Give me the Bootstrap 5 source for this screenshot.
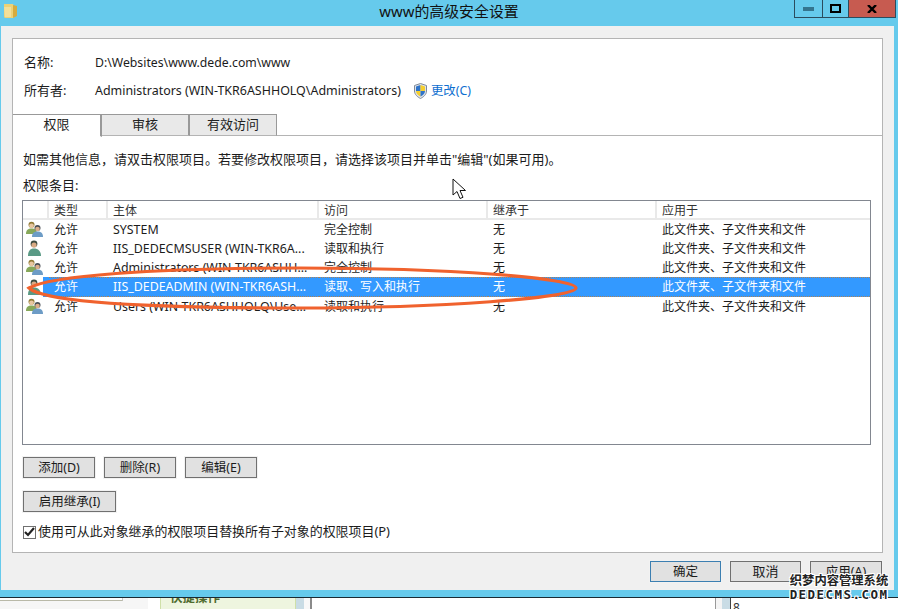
<!DOCTYPE html>
<html lang="zh">
<head>
<meta charset="utf-8">
<title>www的高级安全设置</title>
<link href="https://cdn.jsdelivr.net/npm/bootstrap@5.3.0/dist/css/bootstrap.min.css" rel="stylesheet">
<style>
html,body{margin:0;height:609px;overflow:hidden;background:#fff}
body{font-family:"Noto Sans","Noto Sans CJK SC",sans-serif;font-size:12px;color:#1c1c1c;position:relative;width:898px}
.win{height:598px;background:#66caec;border-bottom:1px solid #1a2a33;display:flex;flex-direction:column;padding:0 4px 7px 1px}
.tbar{height:26px;flex:none;position:relative;margin-left:-1px;margin-right:-4px}
.tbar-title{font-size:14.9px;line-height:22px;text-align:center;color:#111}
.folder{position:absolute;left:4px;top:3px}
.ctrls{position:absolute;right:2px;top:0;height:18px;display:flex;border:solid #2b4c5e;border-width:0 1px 1px 1px}
.ctl{display:flex;align-items:center;justify-content:center;height:17px;border-left:1px solid #2b4c5e}
.ctl:first-child{border-left:0;width:27px}
.ctl-max{width:26px}.ctl-close{width:47px;background:#c75b50;font-weight:700}
.dlg{flex:1;background:#f0f0f0;padding:12px 11px 0 11px;display:flex;flex-direction:column;min-height:0}
.pane{height:515px;background:#fff;border:1px solid #b4b4b4;flex:none;display:flex;flex-direction:column}
.meta{padding:10px 0 0 11px;height:75px;flex:none}
.meta-row{display:flex;align-items:center;height:28px}
.meta-k{width:71px;font-size:13px}
.v-path{font-size:12.25px}
.v-own{font-size:12.45px}
.chg{color:#0f6fd0;text-decoration:none;font-size:12.4px}
.shield{margin:0 4px 0 13px}
.nav-tabs.ttabs{--bs-nav-tabs-border-width:0;border-bottom:1px solid #b4b4b4;height:22px;flex:none;gap:0;padding:0;flex-wrap:nowrap;margin-bottom:0}
.ttab{height:22px;border:1px solid #999;border-bottom:1px solid #b4b4b4;background:#e9e9e9;font-size:13px;color:#222;text-align:center;line-height:19px;border-radius:0;margin:0;padding:0}
.ttab1{width:89px;background:#fff;border-bottom-color:#fff;height:23px;border-left:0;border-right:2px solid #999}
.ttab2{width:88px;border-left:0;border-right:2px solid #999}
.ttab3{width:87px;border-left:0}
.tbody{padding:11px 10px 0 10px;flex:1;display:flex;flex-direction:column;min-height:0}
.lab{font-size:13px;line-height:24px;height:24px}
.lab2{margin-top:2px}
.lbox{margin:3px 1px 0 -1px;height:245px;border:1px solid #828790;background:#fff;flex:none;overflow:hidden}
.perm{table-layout:fixed;width:100%;margin:0;--bs-table-bg:transparent;--bs-table-color:#1c1c1c;border-collapse:separate;border-spacing:0}
.perm th,.perm td{padding:0 0 0 5px;height:19px;line-height:18px;font-weight:400;font-size:12.4px;white-space:nowrap;overflow:hidden;border:0;vertical-align:middle}
.perm th{font-size:12px;border-right:2px solid #e9e9e9;border-bottom:2px solid #e9e9e9;padding-top:3px;line-height:14px;color:#333}
.perm th:last-child{border-right:0}
.perm td.ic{padding:0 0 0 3px;line-height:0}
.perm td.z{font-size:12px}
.perm tr.sel td:not(.ic){background:#3399ff;color:#fff;border-top:1px dotted #a9825a;border-bottom:1px dotted #a9825a}
.perm tr.sel td.ic{background:linear-gradient(to right,transparent 20px,#3399ff 20px)}
.acts{display:flex;gap:9px;margin-top:12px}
.wb{--bs-btn-padding-y:0;--bs-btn-padding-x:0;--bs-btn-font-size:12.5px;--bs-btn-line-height:17px;--bs-btn-border-radius:0;--bs-btn-bg:#e1e1e1;--bs-btn-border-color:#707070;--bs-btn-color:#1c1c1c;--bs-btn-border-width:1px;height:21px;width:72px;box-shadow:0 0 0 1px #f2f2f2}
.wb-in{width:93px;margin-top:13px;display:block}
.fchk{display:flex;align-items:center;gap:2px;margin-top:12px;height:16px;font-size:12.95px;white-space:nowrap}
.cbx{width:13px;height:13px;border:1px solid #707070;background:#fff;display:flex;align-items:center;justify-content:center;flex:none}
.foot{display:flex;justify-content:flex-end;gap:9px;padding-top:8px;padding-right:1px}
.wb-def{--bs-btn-border-color:#3c7fb1;width:71px}
.wb-f{width:71px;font-size:13px}
.wb-a{width:72px}
.strip{height:11px;display:flex;overflow:hidden;background:#fff}
.s0{width:148px;background:#f6f6f6;flex:none}
.s1{width:123px;height:3px;background:#fff;border-bottom:1px solid #b9b9a8;border-right:1px solid #c8c8c8}
.s2{width:12px;background:#fff;flex:none}
.s3{width:136px;background:#eef5df;border-left:1px solid #cfe0a8;border-right:1px solid #cfe0a8;color:#4f6b2e;font-weight:700;flex:none;font-size:12.5px;padding-left:9px;line-height:14px;overflow:hidden}
.s3 span{display:block;margin-top:-7px}
.s4{width:8px;background:#c9dce5;flex:none}
.s5{width:8px;background:#f8f8f8;border-right:2px solid #8a8a8a;flex:none}
.s6{width:403px;background:#fff;flex:none}
.s7{width:7px;background:#f4f4f4;border-left:1px solid #999;flex:none}
.s8{width:8px;background:#c9dce5;flex:none}
.s9{flex:1;border-left:1px solid #444;padding:3px 0 0 2px;line-height:14px;font-size:12px;color:#333}
.ring{position:absolute;left:0;top:0;pointer-events:none}
.cur{position:absolute;left:452px;top:178px}
.mark-w{position:absolute;left:786px;top:573px;width:106px;color:#222;font-weight:700;text-shadow:-1px 0 #fff,1px 0 #fff,0 -1px #fff,0 1px #fff,-1px -1px #fff,1px 1px #fff,1px -1px #fff,-1px 1px #fff}
.mark-1{font-size:12.3px;line-height:16px;white-space:nowrap;text-align:center}
.mark-2{font-family:"DejaVu Sans Mono","Liberation Mono",monospace;font-size:12.5px;line-height:14px;letter-spacing:1.45px;white-space:nowrap;text-align:center;margin-top:-1px}
</style>
</head>
<body>
<div class="win">
  <div class="tbar">
    <svg class="folder" width="13" height="16" viewBox="0 0 13 16"><path d="M0 1h9l1 2v12H1l-1-1z" fill="#ecd277"/><path d="M9 2l4 1v10l-4 2z" fill="#d6ab3e"/><path d="M0 4h7v10H1z" fill="#f2e09a"/></svg>
    <div class="tbar-title">www的高级安全设置</div>
    <div class="ctrls">
      <div class="ctl"><svg width="11" height="4"><rect width="11" height="4" fill="#34758f"/></svg></div>
      <div class="ctl ctl-max"><svg width="11" height="9"><rect x="1" y="1" width="9" height="7" fill="none" stroke="#000" stroke-width="2"/></svg></div>
      <div class="ctl ctl-close"><svg width="10" height="8" viewBox="0 0 10 8"><path d="M1 0l8 8M9 0L1 8" stroke="#000" stroke-width="2.4"/></svg></div>
    </div>
  </div>
  <div class="dlg">
    <div class="pane">
      <div class="meta">
        <div class="meta-row"><div class="meta-k">名称:</div><div class="v-path">D:\Websites\www.dede.com\www</div></div>
        <div class="meta-row"><div class="meta-k">所有者:</div><div class="v-own">Administrators (WIN-TKR6ASHHOLQ\Administrators)</div>
          <svg class="shield" width="13" height="16" viewBox="0 0 13 16"><path d="M6.5.5L12.5 2.5V8c0 3.5-3 6-6 7.5C3.500 14 .5 11.500.5 8V2.500z" fill="#dfe3ea" stroke="#7f8a99"/><path d="M6.500 2L2 3.500V8h4.500z" fill="#2f74c9"/><path d="M6.500 2v6H11V3.500z" fill="#f6cf2f"/><path d="M2 8h4.500v5.500C4 12.500 2 10.500 2 8z" fill="#f6cf2f"/><path d="M6.500 8H11c0 2.500-2 4.500-4.500 5.500z" fill="#2f74c9"/></svg>
          <a class="chg" href="#">更改(C)</a></div>
      </div>
      <ul class="nav nav-tabs ttabs">
        <li class="ttab ttab1">权限</li>
        <li class="ttab ttab2">审核</li>
        <li class="ttab ttab3">有效访问</li>
      </ul>
      <div class="tbody">
        <div class="lab">如需其他信息，请双击权限项目。若要修改权限项目，请选择该项目并单击"编辑"(如果可用)。</div>
        <div class="lab lab2">权限条目:</div>
        <div class="lbox">
          <table class="table perm">
            <colgroup><col style="width:26px"><col style="width:59px"><col style="width:211px"><col style="width:169px"><col style="width:169px"><col></colgroup>
            <thead><tr><th></th><th>类型</th><th>主体</th><th>访问</th><th>继承于</th><th>应用于</th></tr></thead>
            <tbody>
              <tr><td class="ic"><svg width="18" height="17"><use href="#ugroup"/></svg></td><td class="z">允许</td><td>SYSTEM</td><td class="z">完全控制</td><td class="z">无</td><td class="z">此文件夹、子文件夹和文件</td></tr>
              <tr><td class="ic"><svg width="18" height="17"><use href="#uone"/></svg></td><td class="z">允许</td><td>IIS_DEDECMSUSER (WIN-TKR6A...</td><td class="z">读取和执行</td><td class="z">无</td><td class="z">此文件夹、子文件夹和文件</td></tr>
              <tr><td class="ic"><svg width="18" height="17"><use href="#ugroup"/></svg></td><td class="z">允许</td><td>Administrators (WIN-TKR6ASHH...</td><td class="z">完全控制</td><td class="z">无</td><td class="z">此文件夹、子文件夹和文件</td></tr>
              <tr class="sel"><td class="ic"><svg width="18" height="17"><use href="#uone"/></svg></td><td class="z">允许</td><td>IIS_DEDEADMIN (WIN-TKR6ASH...</td><td class="z">读取、写入和执行</td><td class="z">无</td><td class="z">此文件夹、子文件夹和文件</td></tr>
              <tr><td class="ic"><svg width="18" height="17"><use href="#ugroup"/></svg></td><td class="z">允许</td><td>Users (WIN-TKR6ASHHOLQ\Use...</td><td class="z">读取和执行</td><td class="z">无</td><td class="z">此文件夹、子文件夹和文件</td></tr>
            </tbody>
          </table>
        </div>
        <div class="acts">
          <button class="btn wb" type="button">添加(D)</button>
          <button class="btn wb" type="button">删除(R)</button>
          <button class="btn wb" type="button">编辑(E)</button>
        </div>
        <button class="btn wb wb-in" type="button">启用继承(I)</button>
        <div class="fchk"><span class="cbx"><svg width="11" height="10" viewBox="0 0 11 10"><path d="M1 5l3 3 6-7" fill="none" stroke="#222" stroke-width="2.2"/></svg></span>使用可从此对象继承的权限项目替换所有子对象的权限项目(P)</div>
      </div>
    </div>
    <div class="foot">
      <button class="btn wb wb-def" type="button">确定</button>
      <button class="btn wb wb-f" type="button">取消</button>
      <button class="btn wb wb-a" type="button">应用(A)</button>
    </div>
  </div>
</div>
<div class="strip">
  <div class="s0"><div class="s1"></div></div><div class="s2"></div>
  <div class="s3"><span>快捷操作</span></div>
  <div class="s4"></div><div class="s5"></div><div class="s6"></div>
  <div class="s7"></div><div class="s8"></div><div class="s9">8</div>
</div>

<svg width="0" height="0" style="position:absolute">
  <defs>
    <g id="person-b"><circle cx="11.500" cy="7" r="3" fill="#4a4f55"/><circle cx="11.500" cy="8" r="2.300" fill="#dcae8a"/><path d="M6 16c0-4 2-5.500 5.500-5.500S17 12 17 16z" fill="#6d9cc6"/></g>
    <g id="person-g"><circle cx="5.500" cy="3.800" r="3" fill="#8f7a35"/><circle cx="5.500" cy="4.800" r="2.400" fill="#e8c6a0"/><path d="M0 13c0-4 2-5.500 5.500-5.500S11 9 11 13z" fill="#87a85a"/></g>
    <g id="ugroup"><use href="#person-g"/><use href="#person-b"/></g>
    <g id="uone"><circle cx="8" cy="3.800" r="3.400" fill="#3d4b40"/><circle cx="8" cy="5" r="2.600" fill="#d9aa84"/><path d="M2 16c0-5 2-7.500 6-7.500S15 11 15 16z" fill="#5a9a85"/></g>
  </defs>
</svg>

<svg class="ring" width="898" height="609" viewBox="0 0 898 609"><path d="M29 288C50 276 150 268 300 268C450 268 576 278 576 288C576 298 440 308 300 308C150 308 45 303 29 288Z" fill="none" stroke="#f0622e" stroke-width="3.2"/></svg>
<svg class="cur" width="15" height="23" viewBox="0 0 15 23"><path d="M1 1v16l4-3.500 3 7 3-1.200-3-6.800h5.500z" fill="#fff" stroke="#111"/></svg>
<div class="mark-w"><div class="mark-1">织梦内容管理系统</div><div class="mark-2">DEDECMS.COM</div></div>
</body>
</html>
